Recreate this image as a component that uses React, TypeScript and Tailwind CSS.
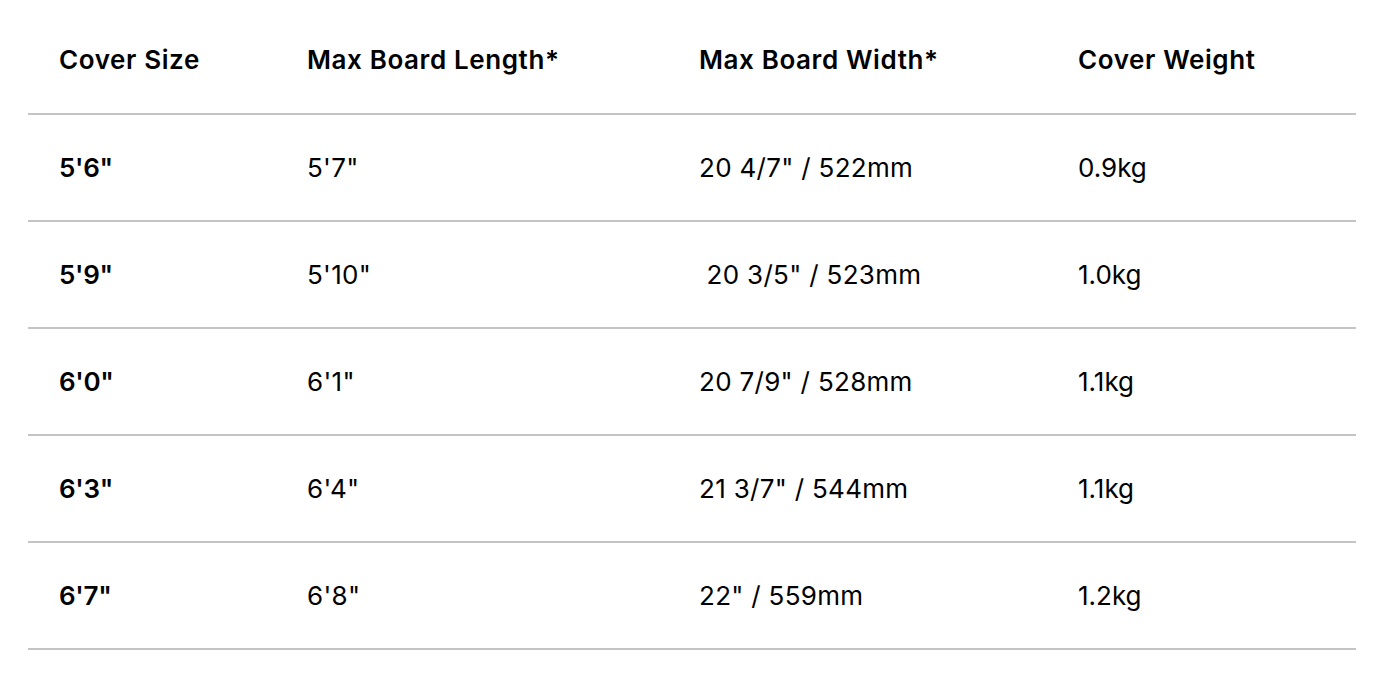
import React from "react";

const rows: [string, string, string, string][] = [
  ["5'6\"", "5'7\"", "20 4/7\" / 522mm", "0.9kg"],
  ["5'9\"", "5'10\"", " 20 3/5\" / 523mm", "1.0kg"],
  ["6'0\"", "6'1\"", "20 7/9\" / 528mm", "1.1kg"],
  ["6'3\"", "6'4\"", "21 3/7\" / 544mm", "1.1kg"],
  ["6'7\"", "6'8\"", "22\" / 559mm", "1.2kg"],
];

export default function App() {
  return (
    <div className="w-[1374px] h-[678px] bg-white text-black" style={{ fontFamily: "Inter, 'Noto Sans', sans-serif" }}>
      <div className="ml-[28px] mr-[18px]">
        <div className="grid grid-cols-[248px_392px_379px_1fr] h-[115px] items-center border-b-2 border-[#c4c4c4] text-[26px] font-semibold tracking-[0.6px]">
          <div className="pl-[31px] pt-[6px]">Cover Size</div>
          <div className="pl-[31px] pt-[6px]">Max Board Length*</div>
          <div className="pl-[31px] pt-[6px]">Max Board Width*</div>
          <div className="pl-[31px] pt-[6px]">Cover Weight</div>
        </div>
        {rows.map((r, i) => (
          <div key={i} className="grid grid-cols-[248px_392px_379px_1fr] h-[107px] items-center border-b-2 border-[#c4c4c4] text-[26px] tracking-[0.3px]">
            <div className="pl-[31px] font-semibold tracking-[-0.3px]">{r[0]}</div>
            <div className="pl-[31px]">{r[1]}</div>
            <div className="pl-[31px] whitespace-pre">{r[2]}</div>
            <div className="pl-[31px] tracking-[0px]">{r[3]}</div>
          </div>
        ))}
      </div>
    </div>
  );
}
